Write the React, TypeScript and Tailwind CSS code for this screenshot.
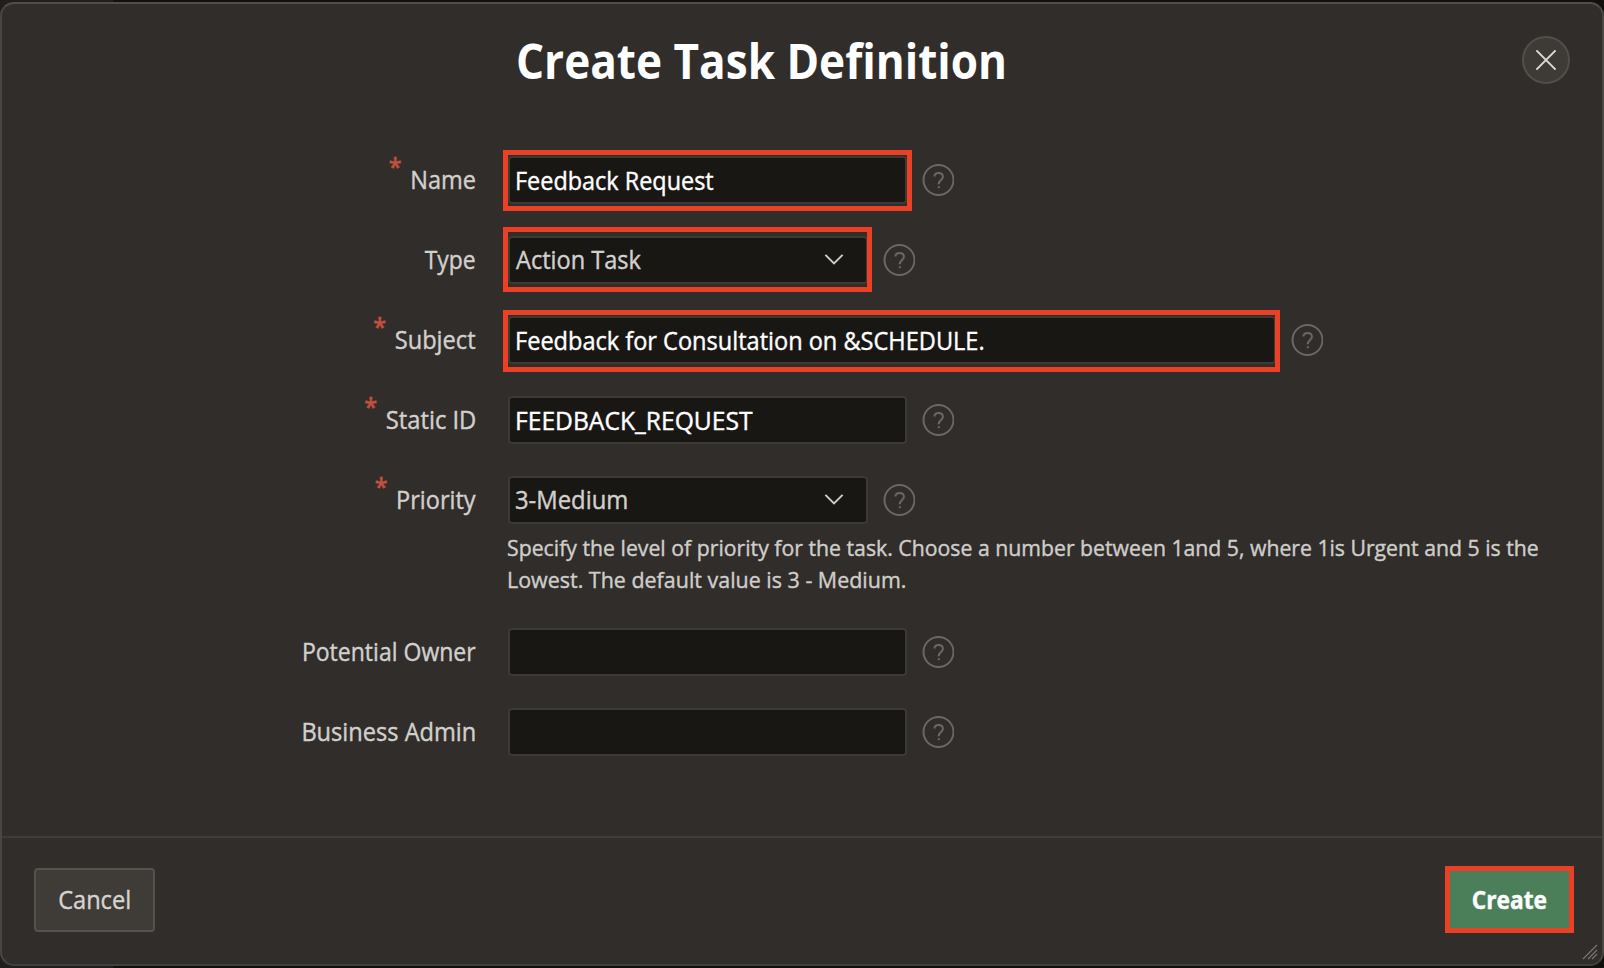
import type { ReactNode } from "react";

const RED = "pointer-events-none absolute border-[5px] border-[#ea4126]";

function HelpIcon() {
  return (
    <svg className="ml-[15px] size-8 shrink-0" viewBox="0 0 32 32" fill="none" stroke="#6b6764" strokeWidth="2">
      <circle cx="16.5" cy="16" r="15" />
      <path d="M12.4 12.6C12.4 10.2 14.2 8.9 16.6 8.9C19 8.9 20.9 10.3 20.9 12.7C20.9 16.2 16.8 16 16.8 20.2" />
      <path d="M16.8 22.2V24.2" />
    </svg>
  );
}

function Chevron() {
  return (
    <svg className="absolute top-[14px] right-[22px] h-[14px] w-[20px]" viewBox="0 0 20 14" fill="none" stroke="#cfcdca" strokeWidth="2">
      <path d="M1.4 2.9L10 11.4L18.6 2.9" />
    </svg>
  );
}

type RowProps = {
  label: string;
  labelScale: string;
  required?: boolean;
  value?: string;
  valueClass?: string;
  width?: string;
  select?: boolean;
  highlight?: string;
  children?: ReactNode;
};

function Row({ label, labelScale, required, value, valueClass = "", width = "w-[399px]", select, highlight, children }: RowProps) {
  return (
    <div className="grid grid-cols-[474px_1fr] gap-x-[32px]">
      <label className="flex h-12 items-center justify-end pb-[2px] text-[25px] leading-8 text-[#d2d0cd]">
        <span className={`relative inline-block origin-right whitespace-nowrap ${labelScale}`}>
          {required && (
            <span className="absolute top-[-13px] right-full mr-[9px] font-semibold text-[#c0513d]">*</span>
          )}
          {label}
        </span>
      </label>
      <div>
        <div className="flex h-12 items-center">
          <div className={`relative flex h-12 items-center rounded-[4px] border-2 border-[#3c3a34] bg-[#191714] ${width}`}>
            {value && (
              <span
                className={`inline-block origin-left text-[25px] leading-8 whitespace-nowrap ${select ? "pb-[2px] text-[#d2d0cd]" : "text-white"} ${valueClass}`}
              >
                {value}
              </span>
            )}
            {select && <Chevron />}
            {highlight && <div className={`${RED} ${highlight}`} />}
          </div>
          <HelpIcon />
        </div>
        {children}
      </div>
    </div>
  );
}

export default function App() {
  return (
    <div className="h-[968px] w-[1604px] overflow-hidden bg-[#12100d] bg-linear-to-r from-[#211f1d] from-[113px] to-[#12100d] to-[114px] py-[2px] font-['Open_Sans','Noto_Sans',sans-serif] [-webkit-text-stroke:0.4px]">
      <div className="relative flex h-[964px] w-full flex-col rounded-[14px] border-2 border-[#4a4642] border-t-[#524d49] border-b-[#433f3c] bg-[#312d2a]">
        <header className="relative flex h-[152px] shrink-0 items-start pt-[25px]">
          <h1 className="ml-[514px] origin-left scale-x-[0.919] text-[48px] leading-[64px] font-bold whitespace-nowrap text-white [-webkit-text-stroke:0px]">
            Create Task Definition
          </h1>
          <button
            aria-label="Close"
            className="absolute top-[32px] right-[32px] flex size-12 items-center justify-center rounded-full border-2 border-[#524e49] bg-[#3e3a35]"
          >
            <svg className="size-[22px]" viewBox="0 0 22 22" fill="none" stroke="#dbd9d6" strokeWidth="2">
              <path d="M1.4 1.4L20.6 20.6M20.6 1.4L1.4 20.6" />
            </svg>
          </button>
        </header>

        <main className="flex grow flex-col gap-8">
          <Row label="Name" labelScale="scale-x-[0.94]" required value="Feedback Request" valueClass="ml-[5px] scale-x-[0.937]" highlight="-top-[8px] -right-[7px] -bottom-[9px] -left-[7px]" />
          <Row label="Type" labelScale="scale-x-[0.915]" value="Action Task" valueClass="ml-[6px] scale-x-[0.942]" width="w-[360px]" select highlight="-top-[11px] -right-[6px] -bottom-[10px] -left-[7px]" />
          <Row label="Subject" labelScale="scale-x-[0.945]" required value="Feedback for Consultation on &SCHEDULE." valueClass="ml-[5px] scale-x-[0.942]" width="w-[768px]" highlight="-top-[8px] -right-[6px] -bottom-[10px] -left-[7px]" />
          <Row label="Static ID" labelScale="scale-x-[0.95]" required value="FEEDBACK_REQUEST" valueClass="ml-[5px] scale-x-[0.985]" />
          <Row label="Priority" labelScale="scale-x-[0.94]" required value="3-Medium" valueClass="ml-[5px] scale-x-[0.953]" width="w-[360px]" select>
            <div className="mt-[7px] mb-[33px] text-[22px] leading-8 whitespace-nowrap text-[#cfcdca]">
              <p className="-ml-px w-fit origin-left scale-x-[0.966]">
                Specify the level of priority for the task. Choose a number between{" "}
                <span className="tracking-[-3px]">1 </span>and 5, where <span className="tracking-[-3px]">1 </span>is Urgent and 5 is the
              </p>
              <p className="-ml-px w-fit origin-left scale-x-[0.975]">Lowest. The default value is 3 - Medium.</p>
            </div>
          </Row>
          <div className="-mt-[32px] flex flex-col gap-8">
            <Row label="Potential Owner" labelScale="scale-x-[0.921]" />
            <Row label="Business Admin" labelScale="scale-x-[0.944]" />
          </div>
        </main>

        <footer className="flex h-[128px] shrink-0 items-start justify-between border-t-2 border-[#403c39] pt-[28px] pr-[32px] pl-[32px]">
          <button className="mt-[2px] flex h-16 w-[121px] items-center justify-center rounded-[4px] border-2 border-[#55514c] bg-[#3f3b36] text-[25px] text-[#d6d4d1]">
            <span className="scale-x-[0.945]">Cancel</span>
          </button>
          <button className="-mr-[4px] flex h-[67px] w-[129px] items-center justify-center border-[5px] border-[#ea4126] bg-[#4a7f5a] text-[25px] font-bold text-white">
            <span className="scale-x-[0.91]">Create</span>
          </button>
        </footer>

        <svg className="absolute right-[4px] bottom-[4px] size-[16px]" viewBox="0 0 16 16" stroke="#7a7672" strokeWidth="1.2" fill="none">
          <path d="M1 15L15 1M6 15L15 6M10 15L15 10" />
        </svg>
      </div>
    </div>
  );
}
